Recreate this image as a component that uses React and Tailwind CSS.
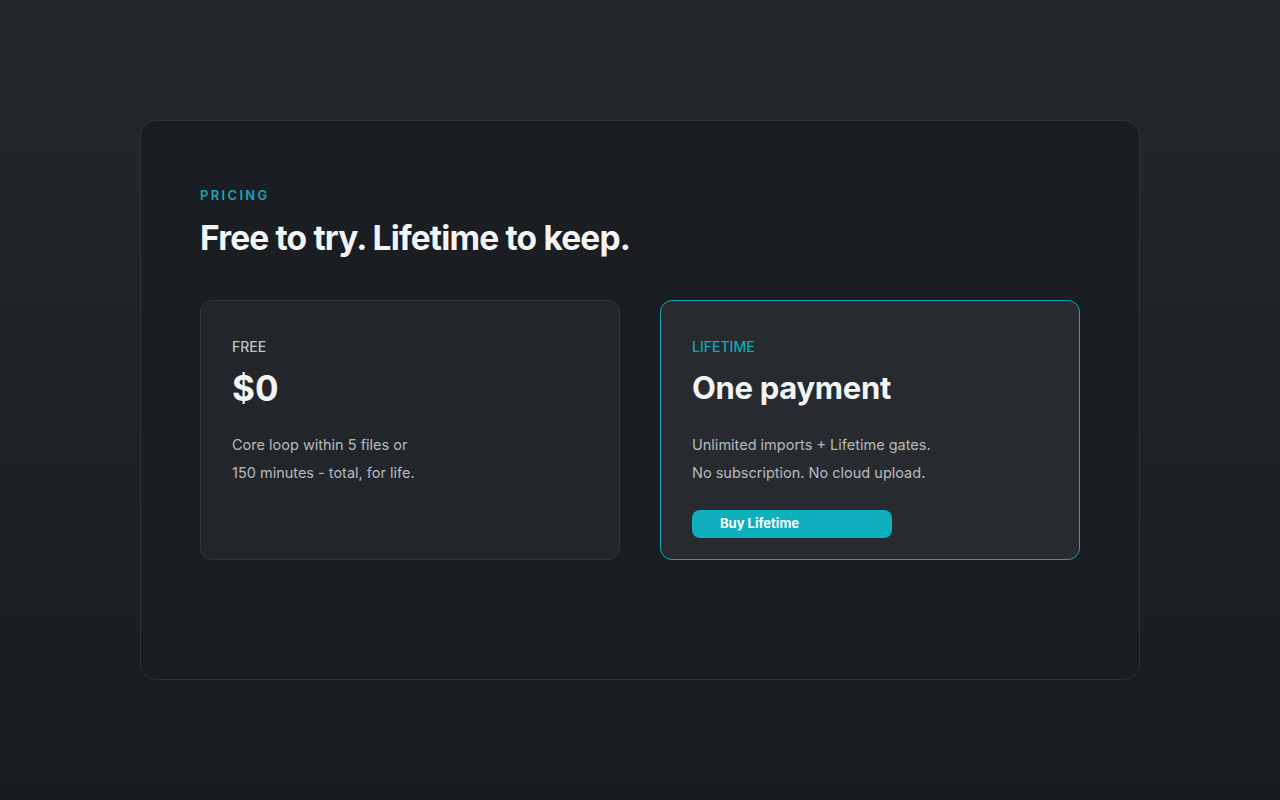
import React from "react";

const App = () => {
  return (
    <div
      className="min-h-screen w-full bg-gradient-to-b from-[#24282c] to-[#181b1f] flex items-start justify-center pt-[120px]"
      style={{ fontFamily: "Inter, 'Noto Sans', sans-serif" }}
    >
      <div className="w-[1000px] h-[560px] rounded-2xl border border-[#30343a] bg-[#1a1d21] px-[59px] pt-[65px]">
        {/* Header */}
        <p className="text-[13px] font-semibold tracking-[0.18em] text-[#14a8b5] leading-[18px]">
          PRICING
        </p>
        <h1 className="mt-[14px] text-[33.5px] font-bold tracking-[-0.025em] text-[#f3f4f6] leading-[40px]">
          Free to try. Lifetime to keep.
        </h1>

        {/* Plans */}
        <div className="mt-[42px] grid grid-cols-2 gap-10">
          <div className="h-[260px] rounded-xl border border-[#32363b] bg-[#22262a] px-[31px] pt-[37px]">
            <p className="text-[14px] font-medium text-[#bfc3c8] leading-[18px]">FREE</p>
            <p className="mt-[10px] text-[35px] font-bold text-[#f3f4f6] leading-[44px]">$0</p>
            <div className="mt-[21px] text-[14.5px] text-[#b6babf] leading-[28px]">
              <p>Core loop within 5 files or</p>
              <p>150 minutes - total, for life.</p>
            </div>
          </div>

          <div className="h-[260px] rounded-xl border border-[#13a6b4] bg-[#272b2f] px-[31px] pt-[37px]">
            <p className="text-[14px] font-medium text-[#14a8b5] leading-[18px]">LIFETIME</p>
            <p className="mt-[10px] text-[31px] font-bold tracking-[-0.01em] text-[#f3f4f6] leading-[44px]">
              One payment
            </p>
            <div className="mt-[21px] text-[14.5px] text-[#b6babf] leading-[28px]">
              <p>Unlimited imports + Lifetime gates.</p>
              <p>No subscription. No cloud upload.</p>
            </div>
            <button className="mt-[23px] flex h-[28px] w-[200px] items-center rounded-lg bg-[#0fafbd] pl-7 text-[13px] font-bold text-white">
              Buy Lifetime
            </button>
          </div>
        </div>
      </div>
    </div>
  );
};

export default App;
